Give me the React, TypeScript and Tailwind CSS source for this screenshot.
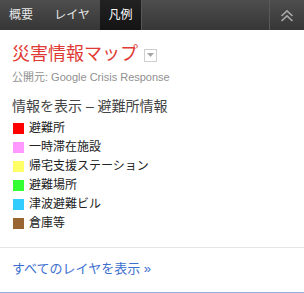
import React from "react";

const font = { fontFamily: '"Liberation Sans", "Noto Sans CJK JP", sans-serif' };

const items: { color: string; label: string }[] = [
  { color: "bg-[#ff0000]", label: "避難所" },
  { color: "bg-[#ff99ff]", label: "一時滞在施設" },
  { color: "bg-[#ffff66]", label: "帰宅支援ステーション" },
  { color: "bg-[#33ff33]", label: "避難場所" },
  { color: "bg-[#33ccff]", label: "津波避難ビル" },
  { color: "bg-[#996633]", label: "倉庫等" },
];

export default function App() {
  return (
    <div className="w-[304px] h-[293px] bg-white overflow-hidden" style={font}>
      <div className="flex h-[30px] bg-gradient-to-b from-[#4e4e4e] to-[#363636] text-[12px] text-[#e6e6e6]">
        <div className="flex items-center px-[9px] w-[42px] justify-center">概要</div>
        <div className="flex items-center justify-center w-[56px] ml-[2px]">レイヤ</div>
        <div className="flex items-center justify-center w-[42px] bg-gradient-to-b from-[#222] to-[#141414] border-r border-[#575757] text-white">凡例</div>
        <div className="flex-1" />
        <div className="w-[35px] border-l border-[#5a5a5a] flex items-center justify-center">
          <svg width="14" height="13" viewBox="0 0 14 13" fill="none" stroke="#a8a8a8" strokeWidth="1.6">
            <path d="M1.5 7 L7 1.8 L12.5 7" />
            <path d="M1.5 12 L7 6.8 L12.5 12" />
          </svg>
        </div>
      </div>
      <div className="pl-[12px] pt-[13px]">
        <div className="flex items-center h-[22px]">
          <span className="text-[18px] leading-[22px] text-[#e03a34]">災害情報マップ</span>
          <span className="ml-[6px] mt-[2px] w-[13px] h-[13px] border border-[#cfcfcf] flex items-center justify-center">
            <svg width="7" height="4" viewBox="0 0 7 4"><path d="M0 0 H7 L3.5 4 Z" fill="#a6a6a6" /></svg>
          </span>
        </div>
        <div className="mt-[5px] text-[11px] leading-[14px] text-[#909090]">公開元: Google Crisis Response</div>
        <div className="mt-[14px] text-[14px] leading-[17px] text-[#444]">情報を表示 – 避難所情報</div>
        <div className="mt-[4px]">
          {items.map((it) => (
            <div key={it.label} className="flex items-center h-[19px]">
              <span className={`w-[11px] h-[11px] ml-[1px] ${it.color}`} />
              <span className="ml-[5px] text-[12px] leading-[19px] text-[#222]">{it.label}</span>
            </div>
          ))}
        </div>
      </div>
      <div className="mt-[14px] border-t border-[#e6e6e6]" />
      <div className="pl-[12px] pt-[12px] pb-[15px] border-b border-[#8fb0de]">
        <div className="text-[13px] leading-[17px] text-[#3d6fcf]">すべてのレイヤを表示 »</div>
      </div>
    </div>
  );
}
